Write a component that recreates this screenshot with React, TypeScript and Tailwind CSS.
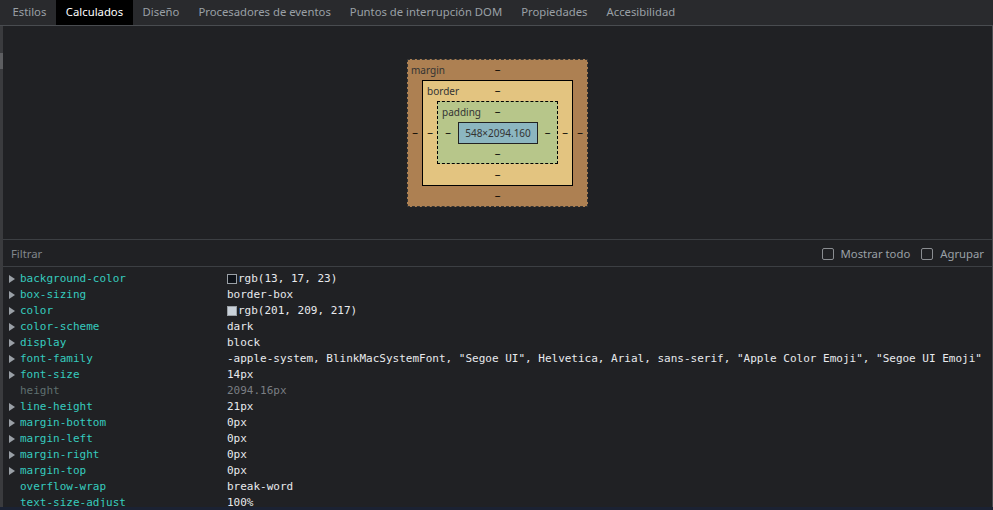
const TABS = [
  "Estilos",
  "Calculados",
  "Diseño",
  "Procesadores de eventos",
  "Puntos de interrupción DOM",
  "Propiedades",
  "Accesibilidad",
];

interface Prop {
  name: string;
  value: string;
  swatch?: string;
  expandable: boolean;
  dim?: boolean;
}

const PROPS: Prop[] = [
  { name: "background-color", value: "rgb(13, 17, 23)", swatch: "#0d1117", expandable: true },
  { name: "box-sizing", value: "border-box", expandable: true },
  { name: "color", value: "rgb(201, 209, 217)", swatch: "#c9d1d9", expandable: true },
  { name: "color-scheme", value: "dark", expandable: true },
  { name: "display", value: "block", expandable: true },
  {
    name: "font-family",
    value:
      '-apple-system, BlinkMacSystemFont, "Segoe UI", Helvetica, Arial, sans-serif, "Apple Color Emoji", "Segoe UI Emoji"',
    expandable: true,
  },
  { name: "font-size", value: "14px", expandable: true },
  { name: "height", value: "2094.16px", expandable: false, dim: true },
  { name: "line-height", value: "21px", expandable: true },
  { name: "margin-bottom", value: "0px", expandable: true },
  { name: "margin-left", value: "0px", expandable: true },
  { name: "margin-right", value: "0px", expandable: true },
  { name: "margin-top", value: "0px", expandable: true },
  { name: "overflow-wrap", value: "break-word", expandable: false },
  { name: "text-size-adjust", value: "100%", expandable: false },
];

function Dash() {
  return <span className="text-[10px] leading-none text-black">‒</span>;
}

function Checkbox({ label }: { label: string }) {
  return (
    <label className="flex items-center gap-[7px]">
      <span className="h-[12px] w-[12px] rounded-[2px] border border-[#8a8d91] bg-transparent" />
      <span className="text-[11.3px] text-[#9aa0a6]">{label}</span>
    </label>
  );
}

function BoxModel() {
  return (
    <div className="flex h-[148px] w-[181px] flex-col border border-dashed border-[#333] bg-[#ad8052] text-[10px] text-[#333]">
      {/* margin top */}
      <div className="grid h-[20px] grid-cols-[1fr_auto_1fr] items-center px-[3px]">
        <span className="leading-none">margin</span>
        <Dash />
        <span />
      </div>
      <div className="flex items-center">
        <div className="flex w-[14px] justify-center">
          <Dash />
        </div>
        {/* border */}
        <div className="flex h-[106px] w-[151px] flex-col border border-black bg-[#e3c480]">
          <div className="grid h-[20px] grid-cols-[1fr_auto_1fr] items-center px-[4px]">
            <span className="leading-none">border</span>
            <Dash />
            <span />
          </div>
          <div className="flex items-center">
            <div className="flex w-[14px] justify-center">
              <Dash />
            </div>
            {/* padding */}
            <div className="flex h-[63px] w-[121px] flex-col border border-dashed border-black bg-[#b7c68a]">
              <div className="grid h-[20px] grid-cols-[1fr_auto_1fr] items-center px-[4px]">
                <span className="leading-none">padding</span>
                <Dash />
                <span />
              </div>
              <div className="flex items-center">
                <div className="flex w-[20px] justify-center">
                  <Dash />
                </div>
                <div className="flex h-[22px] w-[80px] items-center justify-center border border-[#222] bg-[#8cb6c0] text-[10px] text-[#333]">
                  548×2094.160
                </div>
                <div className="flex flex-1 justify-center">
                  <Dash />
                </div>
              </div>
              <div className="flex flex-1 items-center justify-center">
                <Dash />
              </div>
            </div>
            <div className="flex flex-1 justify-center">
              <Dash />
            </div>
          </div>
          <div className="flex flex-1 items-center justify-center">
            <Dash />
          </div>
        </div>
        <div className="flex flex-1 justify-center">
          <Dash />
        </div>
      </div>
      <div className="flex flex-1 items-center justify-center">
        <Dash />
      </div>
    </div>
  );
}

export default function App() {
  return (
    <div
      className="flex h-[510px] w-[993px] flex-col overflow-hidden bg-[#202124]"
      style={{ fontFamily: '"Noto Sans", "Open Sans", sans-serif' }}
    >
      {/* tab bar */}
      <div className="flex h-[26px] shrink-0 border-b border-[#494c50] bg-[#292a2d] pl-[3px]">
        {TABS.map((t, i) => (
          <div
            key={t}
            className={
              i === 1
                ? "flex items-center bg-black px-[10px] text-[11.3px] text-white"
                : "flex items-center px-[9.5px] text-[11.3px] text-[#9aa0a6]"
            }
          >
            {t}
          </div>
        ))}
      </div>

      <div className="flex min-h-0 flex-1">
        {/* left strip */}
        <div className="flex w-[3px] shrink-0 flex-col bg-[#3a3b3e]">
          <div className="mt-[27px] h-[16px] bg-[#5d5e61]" />
        </div>

        <div className="flex min-w-0 flex-1 flex-col border-r border-[#4a4c50]">
          {/* box model */}
          <div className="flex h-[214px] shrink-0 items-start justify-center border-b border-[#3c3f43] pt-[33px]">
            <BoxModel />
          </div>

          {/* filter */}
          <div className="flex h-[27px] shrink-0 items-center justify-between border-b border-[#3c3f43] pl-[8px] pr-[8px] pt-[2px]">
            <span className="text-[11.3px] text-[#80868b]">Filtrar</span>
            <div className="flex items-center gap-[11px]">
              <Checkbox label="Mostrar todo" />
              <Checkbox label="Agrupar" />
            </div>
          </div>

          {/* properties */}
          <div
            className="min-h-0 flex-1 overflow-hidden pt-[4px] text-[11px]"
            style={{ fontFamily: '"DejaVu Sans Mono", "Liberation Mono", monospace' }}
          >
            {PROPS.map((p) => (
              <div key={p.name} className="flex h-[16px] items-center whitespace-nowrap">
                <div className="flex w-[17px] shrink-0 justify-end pr-[5px]">
                  {p.expandable && (
                    <svg width="6" height="8" viewBox="0 0 6 8">
                      <polygon points="0,0 6,4 0,8" fill="#9aa0a6" />
                    </svg>
                  )}
                </div>
                <div className={p.dim ? "w-[207px] shrink-0 text-[#5f6f6f]" : "w-[207px] shrink-0 text-[#36cbbf]"}>
                  {p.name}
                </div>
                <div className={p.dim ? "flex items-center text-[#7a7e83]" : "flex items-center text-[#e8eaed]"}>
                  {p.swatch && (
                    <span
                      className="mr-[1px] inline-block h-[10px] w-[10px] border border-[#9aa0a6]"
                      style={{ backgroundColor: p.swatch }}
                    />
                  )}
                  {p.value}
                </div>
              </div>
            ))}
          </div>
        </div>
      </div>
      <div className="h-[3px] shrink-0 bg-[#1b2233]" />
    </div>
  );
}
